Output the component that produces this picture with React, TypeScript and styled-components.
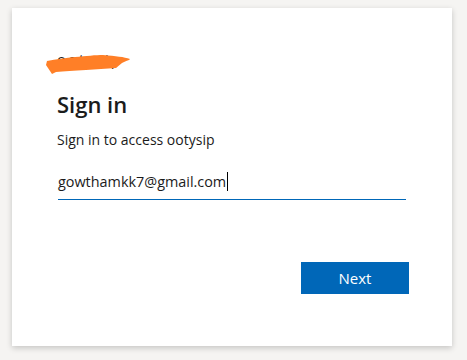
import React from "react";
import styled, { createGlobalStyle } from "styled-components";

const Global = createGlobalStyle`
  html, body { margin: 0; padding: 0; background: #f5f4f2; }
  body { font-family: "Open Sans", "Noto Sans", sans-serif; color: #1b1b1b; }
`;

const Page = styled.div`
  width: 467px;
  height: 360px;
  padding: 8px 15px 14px 12px;
  box-sizing: border-box;
`;

const Card = styled.div`
  width: 440px;
  height: 338px;
  box-sizing: border-box;
  background: #fff;
  box-shadow: 0 2px 6px rgba(0, 0, 0, 0.2);
  padding: 44px 44px 0 45px;
  display: flex;
  flex-direction: column;
`;

const Logo = styled.div`
  position: relative;
  height: 24px;
  width: 100px;
`;

const LogoText = styled.span`
  position: absolute;
  left: 0;
  top: -3px;
  font-size: 15px;
  line-height: 20px;
  color: #222;
  letter-spacing: 2px;
`;

const Scribble = styled.svg`
  position: absolute;
  left: -11px;
  top: 3px;
`;

const Title = styled.h1`
  margin: 14px 0 0;
  font-size: 22px;
  font-weight: 600;
  line-height: 28px;
  color: #1b1b1b;
`;

const Subtitle = styled.p`
  margin: 12px 0 0;
  font-size: 14px;
  line-height: 20px;
  color: #1b1b1b;
`;

const Field = styled.div`
  margin-top: 20px;
  margin-left: 1px;
  width: 348px;
  border-bottom: 1px solid #0067b8;
  height: 30px;
  box-sizing: border-box;
  padding-bottom: 6px;
  display: flex;
  align-items: center;
  font-size: 14.4px;
  color: #1b1b1b;
`;

const Caret = styled.span`
  display: inline-block;
  width: 1px;
  height: 19px;
  background: #000;
  margin-left: 1px;
`;

const Actions = styled.div`
  margin-top: 62px;
  display: flex;
  justify-content: flex-end;
`;

const Button = styled.button`
  width: 108px;
  height: 32px;
  border: none;
  background: #0067b8;
  color: #fff;
  font-family: inherit;
  font-size: 15px;
  padding: 0;
  margin-right: -1px;
`;

export default function App() {
  return (
    <>
      <Global />
      <Page>
        <Card>
          <Logo>
            <LogoText>ootysip</LogoText>
            <Scribble width="88" height="20" viewBox="0 0 88 20">
              <path
                d="M1 6 C 10 4, 20 3, 29 2 C 40 1, 50 0, 57 0 C 70 1, 78 2, 84 4 L 83 5 C 80 6, 78 7, 76 8 L 70 13 C 60 14, 50 14, 40 15 C 28 16, 18 16, 10 17 L 6 19 L 4 16 L 2 13 L 0 10 Z"
                fill="#ff7f27"
              />
            </Scribble>
          </Logo>
          <Title>Sign in</Title>
          <Subtitle>Sign in to access ootysip</Subtitle>
          <Field>
            gowthamkk7@gmail.com
            <Caret />
          </Field>
          <Actions>
            <Button>Next</Button>
          </Actions>
        </Card>
      </Page>
    </>
  );
}
